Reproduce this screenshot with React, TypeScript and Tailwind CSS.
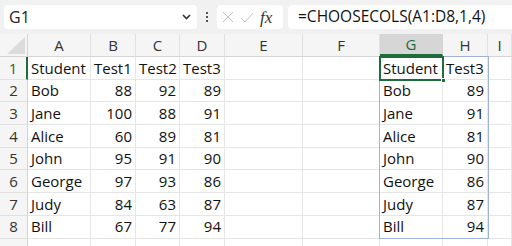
import React from 'react';

const COLS = ['A', 'B', 'C', 'D', 'E', 'F', 'G', 'H', 'I'];
const WIDTHS = [63, 45, 44, 45, 78, 77, 63, 45, 24];

type Cell = { v: string; num?: boolean };

const data: [string, number, number, number][] = [
  ['Bob', 88, 92, 89],
  ['Jane', 100, 88, 91],
  ['Alice', 60, 89, 81],
  ['John', 95, 91, 90],
  ['George', 97, 93, 86],
  ['Judy', 84, 63, 87],
  ['Bill', 67, 77, 94],
];

const rows: Cell[][] = [
  [{ v: 'Student' }, { v: 'Test1' }, { v: 'Test2' }, { v: 'Test3' }, { v: '' }, { v: '' }, { v: 'Student' }, { v: 'Test3' }, { v: '' }],
  ...data.map(([n, a, b, c]) => [
    { v: n },
    { v: String(a), num: true },
    { v: String(b), num: true },
    { v: String(c), num: true },
    { v: '' },
    { v: '' },
    { v: n },
    { v: String(c), num: true },
    { v: '' },
  ]),
  COLS.map(() => ({ v: '' })),
];

const App: React.FC = () => {
  return (
    <div className="w-[512px] h-[246px] overflow-hidden bg-white" style={{ fontFamily: "'Open Sans', 'Noto Sans', sans-serif" }}>
      {/* Formula bar */}
      <div className="h-[34px] bg-[#f1f1f1] flex items-center pl-[4px] gap-0">
        <div className="w-[193px] h-[24px] bg-white rounded-[4px] flex items-center justify-between pl-[5px] pr-[6px]">
          <span className="text-[16px] text-[#222]">G1</span>
          <svg width="9" height="6" viewBox="0 0 9 6">
            <path d="M1 1 L4.5 4.5 L8 1" fill="none" stroke="#333" strokeWidth="1.6" />
          </svg>
        </div>
        <div className="w-[20px] flex flex-col items-center gap-[2px]">
          <div className="w-[2px] h-[2px] bg-[#555]" />
          <div className="w-[2px] h-[2px] bg-[#555]" />
          <div className="w-[2px] h-[2px] bg-[#555]" />
        </div>
        <div className="w-[66px] h-[24px] bg-white rounded-[4px] flex items-center pl-[5px] gap-[6px]">
          <svg width="12" height="12" viewBox="0 0 12 12">
            <path d="M1 1 L11 11 M11 1 L1 11" stroke="#c4c4c4" strokeWidth="1" />
          </svg>
          <svg width="14" height="11" viewBox="0 0 14 11">
            <path d="M1 6 L5 10 L13 1" fill="none" stroke="#c4c4c4" strokeWidth="1" />
          </svg>
          <span className="text-[17px] italic text-[#333] leading-none" style={{ fontFamily: "'Liberation Serif', serif" }}>fx</span>
        </div>
        <div className="ml-[5px] flex-1 h-[24px] bg-white rounded-l-[4px] flex items-center pl-[10px]">
          <span className="text-[15.5px] text-[#111]">=CHOOSECOLS(A1:D8,1,4)</span>
        </div>
      </div>

      {/* Grid */}
      <div className="relative">
        {/* Column headers */}
        <div className="flex h-[23px] bg-[#f5f5f5] border-b border-[#d4d4d4]">
          <div className="w-[28px] h-full flex items-end justify-end border-r border-[#d4d4d4] pr-[2px] pb-[2px]">
            <svg width="18" height="17" viewBox="0 0 18 17">
              <path d="M18 0 L18 17 L0 17 Z" fill="#dcdcdc" />
            </svg>
          </div>
          {COLS.map((c, i) => (
            <div
              key={c}
              className={
                c === 'G'
                  ? 'h-full flex items-center justify-center text-[15px] text-[#1e6b3c] bg-[#d6d6d6] border-r border-[#d4d4d4] border-b-2 border-b-[#1e6b3c] -mb-px'
                  : 'h-full flex items-center justify-center text-[15px] text-[#333] border-r border-[#e0e0e0]'
              }
              style={{ width: WIDTHS[i] }}
            >
              {c}
            </div>
          ))}
        </div>

        {/* Rows */}
        {rows.map((r, ri) => (
          <div key={ri} className="flex h-[22.7px]">
            <div
              className={
                ri === 0
                  ? 'w-[28px] h-full bg-[#f5f5f5] flex items-center justify-center text-[15px] text-[#1e6b3c] border-r-2 border-[#1e6b3c] border-b border-b-[#e0e0e0]'
                  : 'w-[28px] h-full bg-[#f5f5f5] flex items-center justify-center text-[15px] text-[#333] border-r border-[#d4d4d4] border-b border-b-[#e0e0e0]'
              }
            >
              {ri < 8 ? ri + 1 : ''}
            </div>
            {r.map((cell, ci) => (
              <div
                key={ci}
                className={
                  cell.num
                    ? 'h-full flex items-center justify-end px-[3px] text-[15px] text-[#111] border-r border-b border-[#e6e6e6] whitespace-nowrap'
                    : 'h-full flex items-center px-[3px] text-[15px] text-[#111] border-r border-b border-[#e6e6e6] whitespace-nowrap'
                }
                style={{ width: WIDTHS[ci] }}
              >
                {cell.v}
              </div>
            ))}
          </div>
        ))}

        {/* Spill range border G1:H8 */}
        <div className="absolute left-[379px] top-[22px] w-[110px] h-[182.6px] border border-[#9fb2dc] pointer-events-none" />
        {/* Active cell G1 */}
        <div className="absolute left-[379px] top-[22px] w-[65px] h-[24.7px] border-2 border-[#1e6b3c] pointer-events-none" />
        <div className="absolute left-[441px] top-[44px] w-[5px] h-[5px] bg-[#1e6b3c] border border-white pointer-events-none" />
      </div>
    </div>
  );
};

export default App;
